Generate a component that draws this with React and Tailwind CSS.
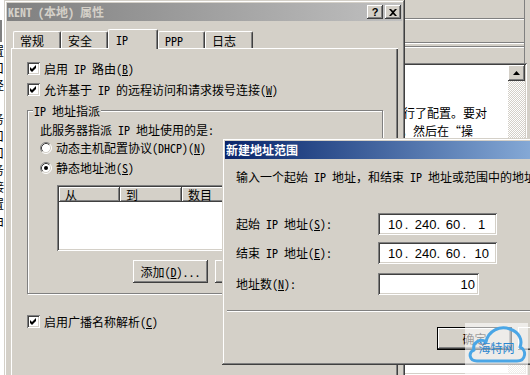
const F = "font-['Noto_Sans_Mono_CJK_SC','Noto_Sans_CJK_SC',sans-serif]";
const RAISED = "shadow-[inset_-1px_-1px_#404040,inset_1px_1px_#ffffff,inset_-2px_-2px_#808080,inset_2px_2px_#d4d0c8]";
const WINDOW = "shadow-[inset_-1px_-1px_#404040,inset_1px_1px_#d4d0c8,inset_-2px_-2px_#808080,inset_2px_2px_#ffffff]";
const SUNKEN = "shadow-[inset_1px_1px_#808080,inset_-1px_-1px_#ffffff,inset_2px_2px_#404040,inset_-2px_-2px_#d4d0c8]";
const HEADCELL = "shadow-[inset_-1px_-1px_#404040,inset_1px_1px_#ffffff,inset_-2px_-2px_#808080]";

function Check() {
  return (
    <span className={`inline-block w-[13px] h-[13px] bg-white shrink-0 ${SUNKEN}`}>
      <svg width="13" height="13" viewBox="0 0 13 13" className="block">
        <path d="M3 5L5 7L9 3V6L5 10L3 8Z" fill="#000" />
      </svg>
    </span>
  );
}

function Radio({ on }) {
  return (
    <svg width="12" height="12" viewBox="0 0 12 12" className="shrink-0 block">
      <circle cx="6" cy="6" r="5" fill="#fff" />
      <path d="M2.11 9.89A5.5 5.5 0 0 1 9.89 2.11" stroke="#808080" fill="none" />
      <path d="M9.89 2.11A5.5 5.5 0 0 1 2.11 9.89" stroke="#ffffff" fill="none" />
      <path d="M2.82 9.18A4.5 4.5 0 0 1 9.18 2.82" stroke="#404040" fill="none" />
      <path d="M9.18 2.82A4.5 4.5 0 0 1 2.82 9.18" stroke="#d4d0c8" fill="none" />
      {on && <circle cx="6" cy="6" r="2" fill="#000" />}
    </svg>
  );
}

function Tab({ label, w, sel }) {
  if (sel) {
    return (
      <div
        className={`relative z-10 -mb-[1px] h-[20px] ${w} bg-[#d4d0c8] flex items-center pl-[7px] border-t border-l border-white border-r border-r-[#404040] rounded-tl-[2px] rounded-tr-[2px] shadow-[inset_-1px_0_#808080]`}
      >
        {label}
      </div>
    );
  }
  return (
    <div
      className={`h-[17px] ${w} flex items-center pl-[6px] pt-[2px] border-t border-l border-white border-r border-r-[#404040] rounded-tl-[2px] rounded-tr-[2px] shadow-[inset_-1px_0_#808080]`}
    >
      {label}
    </div>
  );
}

function CheckRow({ children, className = "" }) {
  return (
    <div className={`h-[21px] flex items-center gap-[4px] whitespace-nowrap ${className}`}>
      <Check />
      <span>{children}</span>
    </div>
  );
}

function IpBox({ parts }) {
  return (
    <div className={`w-[119px] h-[22px] bg-white flex items-center px-[2px] font-['Liberation_Sans',sans-serif] text-[13px] ${SUNKEN}`}>
      {parts.map((p, i) => (
        <div key={i} className="w-[29px] flex items-center">
          <span className="flex-1 text-center pl-[6px]">{p}</span>
          {i < 3 ? <span className="w-[4px] text-center">.</span> : <span className="w-[4px]" />}
        </div>
      ))}
    </div>
  );
}

function BackRight() {
  return (
    <div className="absolute left-[395px] top-0 w-[135px] h-[375px] bg-[#d4d0c8] flex flex-col">
      <div className="h-[63px] flex flex-col w-[130px] border-r border-[#808080]">
        <div className="h-[18px]" />
        <div className="h-[2px] border-t border-[#808080] border-b border-b-white" />
        <div className="h-[22px]" />
        <div className="h-[2px] border-t border-[#808080] border-b border-b-white" />
        <div className="h-[2px]" />
        <div className="h-[2px] border-t border-[#808080] border-b border-b-white" />
      </div>
      <div className={`flex-1 flex p-[2px] mr-[3px] ${SUNKEN}`}>
        <div className="flex-1 bg-white overflow-hidden whitespace-nowrap leading-[18px]">
          <div className="mt-[39px] pl-[6px]">行了配置。要对</div>
          <div className="pl-[4px]">，然后在“操</div>
        </div>
        <div className="w-[17px] flex flex-col bg-[repeating-conic-gradient(#ffffff_0_25%,#d4d0c8_0_50%)] bg-[length:2px_2px]">
          <div className={`h-[16px] bg-[#d4d0c8] flex items-center justify-center ${RAISED}`}>
            <svg width="7" height="4" viewBox="0 0 7 4" className="block">
              <path d="M3.5 0L7 4H0Z" fill="#000" />
            </svg>
          </div>
        </div>
      </div>
    </div>
  );
}

function MainDialog() {
  return (
    <div className={`absolute left-[4px] top-0 w-[401px] h-[430px] bg-[#d4d0c8] p-[3px] ${WINDOW}`}>
      <div className="h-[18px] flex items-center pl-[1px] pr-[1px] bg-gradient-to-r from-[#808080] to-[#c0c0c0]">
        <span className="font-bold text-[#d4d0c8] whitespace-nowrap">KENT (本地) 属性</span>
        <div className="ml-auto flex gap-[2px]">
          <div className={`w-[16px] h-[14px] bg-[#d4d0c8] flex items-center justify-center font-bold text-[11px] leading-none font-['Liberation_Sans',sans-serif] ${RAISED}`}>
            ?
          </div>
          <div className={`w-[16px] h-[14px] bg-[#d4d0c8] flex items-center justify-center ${RAISED}`}>
            <svg width="8" height="7" viewBox="0 0 8 7" className="block">
              <path d="M0 0H2L4 2L6 0H8L5 3.5L8 7H6L4 5L2 7H0L3 3.5Z" fill="#000" />
            </svg>
          </div>
        </div>
      </div>
      <div className="px-[4px]">
        <div className="mt-[8px] h-[19px] flex items-end pl-[2px]">
          <Tab label="常规" w="w-[48px]" />
          <Tab label="安全" w="w-[47px]" />
          <Tab label="IP" w="w-[50px]" sel />
          <Tab label="PPP" w="w-[47px]" />
          <Tab label="日志" w="w-[48px]" />
        </div>
        <div className="h-[400px] pl-[16px] pt-[10px] shadow-[inset_1px_1px_#ffffff,inset_-1px_-1px_#404040,inset_-2px_-2px_#808080]">
          <CheckRow>启用 IP 路由(<span className="underline">B</span>)</CheckRow>
          <CheckRow>允许基于 IP 的远程访问和请求拨号连接(<span className="underline">W</span>)</CheckRow>
          <div className="relative mt-[10px] w-[356px] h-[184px] border border-[#808080] shadow-[1px_1px_#ffffff,inset_1px_1px_#ffffff] pl-[12px] pt-[11px]">
            <span className="absolute -top-[8px] left-[5px] px-[1px] bg-[#d4d0c8] leading-[16px] whitespace-nowrap">IP 地址指派</span>
            <div className="h-[16px] flex items-center whitespace-nowrap">此服务器指派 IP 地址使用的是:</div>
            <div className="mt-[2px] h-[16px] flex items-center gap-[4px] whitespace-nowrap">
              <Radio />
              <span>动态主机配置协议(DHCP)(<span className="underline">N</span>)</span>
            </div>
            <div className="mt-[4px] h-[16px] flex items-center gap-[4px] whitespace-nowrap">
              <Radio on />
              <span>静态地址池(<span className="underline">S</span>)</span>
            </div>
            <div className={`mt-[9px] ml-[17px] w-[313px] h-[66px] bg-white p-[2px] ${SUNKEN}`}>
              <div className="flex h-[15px] bg-[#d4d0c8]">
                <div className={`w-[61px] pl-[6px] flex items-center ${HEADCELL}`}>从</div>
                <div className={`w-[62px] pl-[6px] flex items-center ${HEADCELL}`}>到</div>
                <div className={`w-[62px] pl-[6px] flex items-center ${HEADCELL}`}>数目</div>
                <div className={`flex-1 ${HEADCELL}`} />
              </div>
            </div>
            <div className="mt-[9px] ml-[93px] flex gap-[7px]">
              <div className={`w-[75px] h-[23px] bg-[#d4d0c8] flex items-center justify-center whitespace-nowrap ${RAISED}`}>
                添加(<span className="underline">D</span>)...
              </div>
              <div className={`w-[75px] h-[23px] bg-[#d4d0c8] ${RAISED}`} />
            </div>
          </div>
          <CheckRow className="mt-[17px]">启用广播名称解析(<span className="underline">C</span>)</CheckRow>
        </div>
      </div>
    </div>
  );
}

function NewDialog() {
  return (
    <div className={`absolute left-[222px] top-[138px] w-[385px] h-[227px] bg-[#d4d0c8] p-[3px] ${WINDOW}`}>
      <div className="h-[18px] flex items-center pl-[1px] bg-gradient-to-r from-[#0a246a] to-[#a6caf0]">
        <span className="font-bold text-white whitespace-nowrap">新建地址范围</span>
      </div>
      <div className="pl-[11px]">
        <div className="mt-[10px] h-[16px] flex items-center whitespace-nowrap">
          输入一个起始 IP 地址，和结束 IP 地址或范围中的地址数。
        </div>
        <div className="mt-[28px] h-[22px] flex items-center">
          <span className="w-[142px] whitespace-nowrap">起始 IP 地址(<span className="underline">S</span>):</span>
          <IpBox parts={["10", "240", "60", "1"]} />
        </div>
        <div className="mt-[7px] h-[22px] flex items-center">
          <span className="w-[142px] whitespace-nowrap">结束 IP 地址(<span className="underline">E</span>):</span>
          <IpBox parts={["10", "240", "60", "10"]} />
        </div>
        <div className="mt-[9px] h-[22px] flex items-center">
          <span className="w-[142px] whitespace-nowrap">地址数(<span className="underline">N</span>):</span>
          <div className={`w-[101px] h-[22px] bg-white flex items-center justify-end pr-[4px] font-['Liberation_Sans',sans-serif] text-[13px] ${SUNKEN}`}>
            10
          </div>
        </div>
      </div>
      <div className="mt-[15px] ml-[2px] h-[2px] border-t border-[#808080] border-b border-b-white" />
      <div className="mt-[15px] pl-[212px] flex gap-[6px]">
        <div className="w-[75px] h-[23px] border border-black">
          <div className={`w-full h-full bg-[#d4d0c8] flex items-center justify-center ${RAISED}`}>确定</div>
        </div>
        <div className={`w-[75px] h-[23px] bg-[#d4d0c8] flex items-center justify-center ${RAISED}`}>取消</div>
      </div>
    </div>
  );
}

function Watermark() {
  return (
    <div className="absolute left-[465px] top-[323px] w-[63px] h-[52px] bg-white/60">
      <div className="relative w-full h-[42px] flex items-center justify-center pt-[8px]">
        <svg width="63" height="42" viewBox="0 0 63 42" className="absolute left-0 top-0">
          <path
            d="M12 38C4 38 3 29 9 27C7 19 16 15 21 19C23 8 35 2 45 6C54 9 58 17 55 24C62 27 61 38 52 38Z"
            fill="none"
            stroke="#4aa6e6"
            strokeWidth="3"
            strokeLinejoin="round"
          />
        </svg>
        <span className="relative text-[#2a86cf] text-[12px] whitespace-nowrap">海特网</span>
      </div>
    </div>
  );
}

export default function App() {
  return (
    <div className={`relative w-[530px] h-[375px] overflow-hidden bg-[#d4d0c8] text-[12px] leading-none text-black ${F}`}>
      <div className="absolute left-0 top-0 w-[4px] h-[375px] bg-white overflow-hidden">
        <div className="mt-[20px] w-[2px] h-[22px] bg-[#808080]" />
        <div className="-ml-[56px] w-[60px] text-right leading-[17px] whitespace-nowrap">
          <div>设置</div>
          <div>端口</div>
          <div>路径</div>
          <div className="h-[17px]" />
          <div>服务</div>
          <div>接口</div>
          <div>端口</div>
          <div>服务</div>
          <div>连接</div>
          <div>设置</div>
          <div>路由</div>
        </div>
      </div>
      <BackRight />
      <MainDialog />
      <NewDialog />
      <Watermark />
    </div>
  );
}
